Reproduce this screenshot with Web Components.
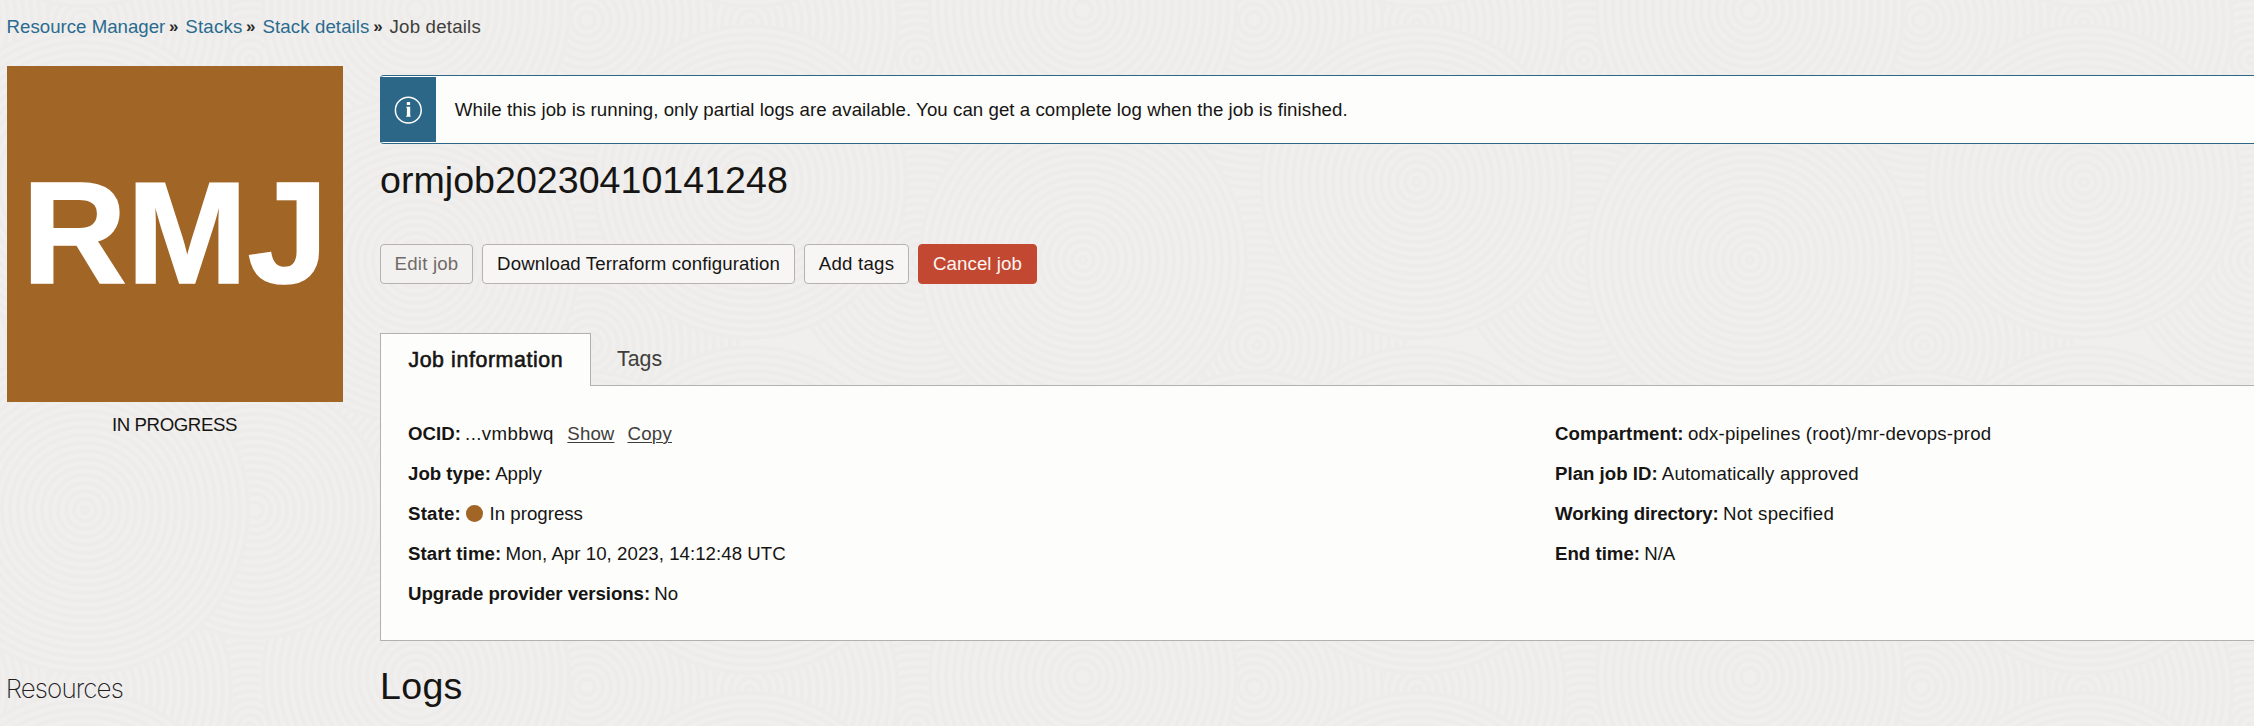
<!DOCTYPE html>
<html lang="en">
<head>
<meta charset="utf-8">
<title>Job details</title>
<style>
html, body { margin: 0; padding: 0; height: 100%; overflow: hidden; }
body { font-family: "Liberation Sans", Arial, sans-serif; font-size: 18.67px; line-height: 21px; color: #161513; }
</style>
</head>
<body>
<console-page>
  <bread-crumbs slot="crumbs">
    <crumb-item link>Resource Manager</crumb-item>
    <crumb-item link style="letter-spacing:.2px">Stacks</crumb-item>
    <crumb-item link style="letter-spacing:.1px">Stack details</crumb-item>
    <crumb-item style="letter-spacing:.2px">Job details</crumb-item>
  </bread-crumbs>
  <status-tile slot="side" code="RMJ">IN PROGRESS</status-tile>
  <side-heading slot="side">Resources</side-heading>
  <info-alert>While this job is running, only partial logs are available. You can get a complete log when the job is finished.</info-alert>
  <page-heading style="margin-top:15px">ormjob20230410141248</page-heading>
  <button-row>
    <action-button kind="disabled" style="width:93px;letter-spacing:.2px">Edit job</action-button>
    <action-button style="width:313px;letter-spacing:.1px">Download Terraform configuration</action-button>
    <action-button style="width:105px;letter-spacing:.22px">Add tags</action-button>
    <action-button kind="danger" style="width:119px;letter-spacing:.07px">Cancel job</action-button>
  </button-row>
  <tab-panel>
    <tab-label slot="tab" active>Job information</tab-label>
    <tab-label slot="tab">Tags</tab-label>
    <info-list>
      <info-row label="OCID:"><span style="letter-spacing:.42px">...vmbbwq</span><text-link style="margin-left:13.5px;letter-spacing:.1px">Show</text-link><text-link style="margin-left:13px;letter-spacing:.25px">Copy</text-link></info-row>
      <info-row label="Job type:">Apply</info-row>
      <info-row label="State:" style="--ls:.2px"><state-dot></state-dot>In progress</info-row>
      <info-row label="Start time:" style="--ls:.1px;letter-spacing:.04px">Mon, Apr 10, 2023, 14:12:48 UTC</info-row>
      <info-row label="Upgrade provider versions:" style="--ls:-.06px">No</info-row>
    </info-list>
    <info-list>
      <info-row label="Compartment:" style="--ls:.1px;letter-spacing:.2px">odx-pipelines (root)/mr-devops-prod</info-row>
      <info-row label="Plan job ID:" style="letter-spacing:.14px">Automatically approved</info-row>
      <info-row label="Working directory:" style="--ls:-.1px;letter-spacing:.25px">Not specified</info-row>
      <info-row label="End time:">N/A</info-row>
    </info-list>
  </tab-panel>
  <page-heading style="margin-top:24px;letter-spacing:.3px">Logs</page-heading>
</console-page>

<script>
const define = (name, html, setup) => {
  const template = document.createElement('template');
  template.innerHTML = html;
  customElements.define(name, class extends HTMLElement {
    constructor() {
      super();
      this.attachShadow({ mode: 'open' }).append(template.content.cloneNode(true));
    }
    connectedCallback() { if (setup) setup(this, this.shadowRoot); }
  });
};

// Repeating background of overlapping ripple discs.
function ripples() {
  const size = 667;
  const discs = [
    [250, 60, 150], [590, 30, 160], [590, 345, 150], [420, 470, 150], [587, 520, 150],
    [750, 690, 150], [587, 687, 130], [416, 677, 155], [253, 260, 130], [416, 260, 165],
    [255, 510, 130], [85, 510, 165], [83, 182, 158]
  ];
  let out = '';
  for (const [x, y, r] of discs) {
    for (const dx of [-size, 0, size]) for (const dy of [-size, 0, size]) {
      const cx = x + dx, cy = y + dy;
      if (cx + r < 0 || cx - r > size || cy + r < 0 || cy - r > size) continue;
      out += `<circle cx="${cx}" cy="${cy}" r="${r}" fill="#f0efed"/>`;
      for (let k = r - 2; k > 2; k -= 8)
        out += `<circle cx="${cx}" cy="${cy}" r="${k.toFixed(1)}" fill="none" stroke="#edecea" stroke-width="3.6"/>`;
    }
  }
  const svg = `<svg xmlns="http://www.w3.org/2000/svg" width="${size}" height="${size}">${out}</svg>`;
  return `url("data:image/svg+xml,${encodeURIComponent(svg)}")`;
}

define('console-page', `
  <style>
    :host { display: grid; grid-template-columns: 336px minmax(0, 1fr); grid-template-rows: auto 1fr;
      column-gap: 37px; height: 100vh; box-sizing: border-box; overflow: hidden; padding: 16px 0 0 7px; background-color: #f0efed; }
    header { grid-column: 1 / 3; height: 50px; }
    main { padding-top: 9px; }
  </style>
  <header><slot name="crumbs"></slot></header>
  <aside><slot name="side"></slot></aside>
  <main><slot></slot></main>`, host => { host.style.backgroundImage = ripples(); });

define('bread-crumbs', `
  <style>:host { display: flex; margin-left: -.4px; }</style><slot></slot>`);

define('crumb-item', `
  <style>
    :host { display: flex; color: #403e3b; white-space: nowrap; }
    :host([link]) { color: #2a6b8f; }
    i { display: none; box-sizing: border-box; width: 20px; padding-left: 3.6px; font-style: normal; font-size: 17px; font-weight: 700; letter-spacing: 0; color: #2b2927; }
    :host([link]) i { display: block; }
  </style>
  <slot></slot><i>»</i>`);

define('status-tile', `
  <style>
    :host { display: block; height: 607px; text-align: center; letter-spacing: -.42px; }
    b { display: flex; justify-content: center; align-items: center; height: 336px; padding-bottom: 1px; box-sizing: border-box;
      margin-bottom: 12px; background: #a16525; color: #fff; font-size: 145px; line-height: 163px; letter-spacing: 0; -webkit-text-stroke: 1.6px #fff; }
    p { margin: 0 1px 0 0; }
  </style>
  <b></b><p><slot></slot></p>`, (host, root) => { root.querySelector('b').textContent = host.getAttribute('code'); });

define('side-heading', `
  <style>:host { display: block; font: 200 26px/31px Inter, sans-serif; letter-spacing: -.9px; color: #22201e; margin-left: -1.3px; }</style><slot></slot>`);

define('info-alert', `
  <style>
    :host { display: flex; box-sizing: border-box; height: 69px; padding: 1px 0; border: 1px solid #2c6788; border-width: 1px 0 1px 0;
      border-radius: 4px 0 0 4px; background: #fdfdfb; letter-spacing: .055px; }
    div { display: flex; align-items: center; justify-content: center; width: 56px; background: #2c6788; margin-right: 18.8px; }
    p { margin: 0; padding-top: 22px; white-space: nowrap; }
  </style>
  <div><svg width="28" height="28" viewBox="0 0 28 28"><circle cx="14.3" cy="14.2" r="12.9" fill="none" stroke="#fff" stroke-width="1.5"/><path d="M12.8 6h3.3v3h-3.3zM12.3 10.8h3.9v9h.5v1h-4.6v-1h.8v-8h-.6z" fill="#fff"/></svg></div>
  <p><slot></slot></p>`);

define('page-heading', `
  <style>:host { display: block; font-size: 37.6px; line-height: 42px; letter-spacing: .02px; white-space: nowrap; }</style><slot></slot>`);

define('button-row', `
  <style>:host { display: flex; gap: 9px; margin: 43px 0 49px; }</style><slot></slot>`);

define('action-button', `
  <style>
    :host { display: block; box-sizing: border-box; height: 40px; border: 1px solid #b5b2af; border-radius: 4px;
      background: #f8f6f5; text-align: center; line-height: 37px; white-space: nowrap; }
    :host([kind=disabled]) { background: #f3f1f0; color: #706b67; }
    :host([kind=danger]) { background: #c34831; border-color: #c34831; color: #fdf6f4; }
  </style><slot></slot>`);

define('tab-panel', `
  <style>
    nav { display: flex; height: 53px; }
    section { display: grid; grid-template-columns: 1147px 1fr; box-sizing: border-box; margin-top: -1px; height: 256px;
      padding: 28px 0 26px 27px; border: 1px solid #b3b1ae; border-right: 0; background: #fdfdfb; }
  </style>
  <nav><slot name="tab"></slot></nav><section><slot></slot></section>`);

define('tab-label', `
  <style>
    :host { display: block; box-sizing: border-box; height: 53px; padding: 14px 26px 0; font-size: 21.33px; line-height: 24px; color: #403e3b; white-space: nowrap; }
    :host([active]) { position: relative; width: 211px; border: 1px solid #b3b1ae; border-bottom: 0; background: #fdfdfb;
      padding: 14px 0 0 27.4px; color: #161513; letter-spacing: .6px; -webkit-text-stroke: .6px #161513; }
  </style><slot></slot>`);

define('info-list', `<style>:host { display: block; }</style><slot></slot>`);

define('info-row', `
  <style>
    :host { display: flex; height: 40px; line-height: 39px; white-space: nowrap; }
    b { margin-right: 4.2px; letter-spacing: var(--ls, 0); }
  </style><b></b><slot></slot>`, (host, root) => { root.querySelector('b').textContent = host.getAttribute('label'); });

define('text-link', `
  <style>:host { display: inline-block; color: #403e3b; text-decoration: underline; text-decoration-thickness: 1px; text-underline-offset: 2px; }</style><slot></slot>`);

define('state-dot', `
  <style>:host { display: block; width: 17.4px; height: 17.4px; margin: 10.8px 6.4px 0 .6px; border-radius: 50%; background: #a16525; }</style>`);
</script>
</body>
</html>
